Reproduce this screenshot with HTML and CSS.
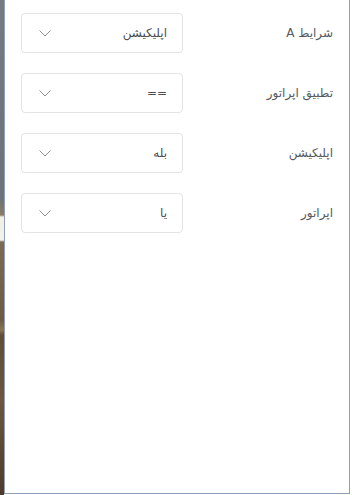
FILE: index.html
```html
<!DOCTYPE html>
<html lang="fa">
<head>
<meta charset="utf-8">
<link rel="stylesheet" href="styles.css">
</head>
<body>
<div class="page">
  <div class="backdrop"></div>
  <div class="panel" dir="rtl">
    <div class="row">
      <div class="label">شرایط A</div>
      <div class="select"><span class="value">اپلیکیشن</span><svg class="chev" width="12" height="7" viewBox="0 0 12 7"><path d="M0.5 0.5 L6 6 L11.5 0.5" fill="none" stroke="#8a8f99" stroke-width="1"/></svg></div>
    </div>
    <div class="row">
      <div class="label">تطبیق اپراتور</div>
      <div class="select"><span class="value">==</span><svg class="chev" width="12" height="7" viewBox="0 0 12 7"><path d="M0.5 0.5 L6 6 L11.5 0.5" fill="none" stroke="#8a8f99" stroke-width="1"/></svg></div>
    </div>
    <div class="row">
      <div class="label">اپلیکیشن</div>
      <div class="select"><span class="value">بله</span><svg class="chev" width="12" height="7" viewBox="0 0 12 7"><path d="M0.5 0.5 L6 6 L11.5 0.5" fill="none" stroke="#8a8f99" stroke-width="1"/></svg></div>
    </div>
    <div class="row">
      <div class="label">اپراتور</div>
      <div class="select"><span class="value">یا</span><svg class="chev" width="12" height="7" viewBox="0 0 12 7"><path d="M0.5 0.5 L6 6 L11.5 0.5" fill="none" stroke="#8a8f99" stroke-width="1"/></svg></div>
    </div>
  </div>
</div>
</body>
</html>
```
FILE: styles.css
```css
html, body {
  margin: 0;
  padding: 0;
  background: #ffffff;
}
body {
  width: 352px;
  height: 495px;
  overflow: hidden;
  font-family: "DejaVu Sans", "Noto Sans", sans-serif;
}
.page {
  display: flex;
  height: 495px;
}
.backdrop {
  width: 4px;
  flex: none;
  background: linear-gradient(to bottom,
    #76797e 0px, #6f7276 200px,
    #8a7b66 215px, #f2efe9 217px, #f4f1ec 240px,
    #7d6a55 242px, #6b5a48 320px, #8a7356 330px,
    #5f4c3a 335px, #6a5642 400px, #4c3b2d 495px);
}
.panel {
  width: 346px;
  height: 494px;
  flex: none;
  border-left: 1px solid #8fa0b6;
  border-right: 1px solid #8fa0b6;
  border-bottom: 1px solid #8fa0b6;
  background: #ffffff;
  padding: 13px 16px 0 16px;
  box-sizing: border-box;
  display: flex;
  flex-direction: column;
  gap: 20px;
}
.row {
  display: flex;
  align-items: center;
  justify-content: space-between;
  height: 40px;
}
.label {
  font-size: 12px;
  color: #555a60;
  white-space: nowrap;
}
.select {
  width: 162px;
  height: 40px;
  box-sizing: border-box;
  border: 1px solid #e3e4e6;
  border-radius: 4px;
  display: flex;
  align-items: center;
  justify-content: space-between;
  padding: 0 15px 0 17px;
}
.value {
  font-size: 12px;
  color: #4a4e54;
}
.chev {
  display: block;
  margin-top: 1px;
}
```
